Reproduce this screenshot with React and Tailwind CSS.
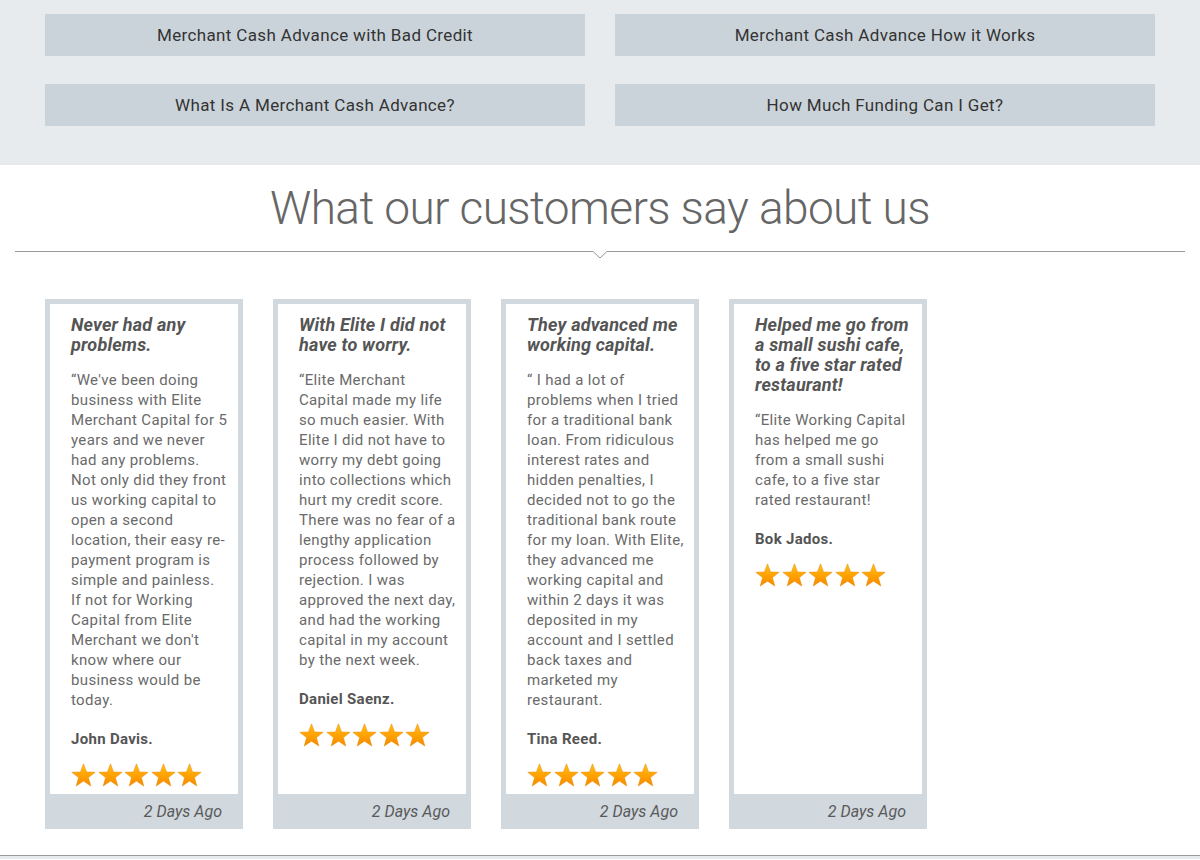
import React from "react";

const LINKS = [
  "Merchant Cash Advance with Bad Credit",
  "Merchant Cash Advance How it Works",
  "What Is A Merchant Cash Advance?",
  "How Much Funding Can I Get?",
];

const REVIEWS = [
  {
    title: "Never had any problems.",
    body: "\u201cWe've been doing business with Elite Merchant Capital for 5 years and we never had any problems. Not only did they front us working capital to open a second location, their easy re-payment program is simple and painless. If not for Working Capital from Elite Merchant we don't know where our business would be today.",
    name: "John Davis.",
  },
  {
    title: "With Elite I did not have to worry.",
    body: "\u201cElite Merchant Capital made my life so much easier. With Elite I did not have to worry my debt going into collections which hurt my credit score. There was no fear of a lengthy application process followed by rejection. I was approved the next day, and had the working capital in my account by the next week.",
    name: "Daniel Saenz.",
  },
  {
    title: "They advanced me working capital.",
    body: "\u201c I had a lot of problems when I tried for a traditional bank loan. From ridiculous interest rates and hidden penalties, I decided not to go the traditional bank route for my loan. With Elite, they advanced me working capital and within 2 days it was deposited in my account and I settled back taxes and marketed my restaurant.",
    name: "Tina Reed.",
  },
  {
    title: "Helped me go from a small sushi cafe, to a five star rated restaurant!",
    body: "\u201cElite Working Capital has helped me go from a small sushi cafe, to a five star rated restaurant!",
    name: "Bok Jados.",
  },
];

function Star({ id }) {
  return (
    <svg width="25" height="25" viewBox="0 0 24 24" className="block">
      <defs>
        <linearGradient id={id} x1="0" y1="0" x2="0" y2="1">
          <stop offset="0" stopColor="#ffc21a" />
          <stop offset="0.55" stopColor="#ffa000" />
          <stop offset="1" stopColor="#f58a00" />
        </linearGradient>
      </defs>
      <polygon
        points="12,0.8 14.9,8.6 23.2,8.9 16.7,14 19,22.1 12,17.4 5,22.1 7.3,14 0.8,8.9 9.1,8.6"
        fill={`url(#${id})`}
        stroke="#e98a00"
        strokeWidth="0.5"
      />
    </svg>
  );
}

function Stars({ prefix }) {
  return (
    <div className="flex gap-[1.5px]">
      {[0, 1, 2, 3, 4].map((i) => (
        <Star key={i} id={`${prefix}-${i}`} />
      ))}
    </div>
  );
}

function ReviewCard({ review, index }) {
  return (
    <div className="flex h-[530px] w-[198px] flex-col bg-[#d1d8de] px-[5px] pt-[5px]">
      <div className="flex-1 bg-white pl-[21px] pr-[10px] pt-[11px]">
        <h3 className="text-[18px] font-bold italic leading-[20px] tracking-[0.2px] text-[#555]">
          {review.title}
        </h3>
        <p className="mt-[15px] text-[15px] leading-[20px] tracking-[0.35px] text-[#6a6a6a]">{review.body}</p>
        <p className="mt-[19px] text-[15px] font-bold leading-[20px] tracking-[0.3px] text-[#555]">
          {review.name}
        </p>
        <div className="mt-[14px]">
          <Stars prefix={`s${index}`} />
        </div>
      </div>
      <div className="flex h-[35px] items-center justify-end pr-[16px] text-[16px] italic text-[#5a5a5a]">
        2 Days Ago
      </div>
    </div>
  );
}

export default function App() {
  return (
    <div className="min-h-[860px] bg-white font-['Roboto',sans-serif]">
      <section className="h-[165px] bg-[#e7ebee] px-[45px] pt-[14px]">
        <div className="grid grid-cols-2 gap-x-[30px] gap-y-[28px]">
          {LINKS.map((label) => (
            <a
              key={label}
              href="#"
              className="flex h-[42px] items-center justify-center bg-[#cbd3da] pt-[2px] text-[17px] tracking-[0.35px] text-[#333]"
            >
              {label}
            </a>
          ))}
        </div>
      </section>

      <section className="px-[15px]">
        <h2 className="pt-[16px] text-center text-[46px] font-light leading-[54px] tracking-[-0.6px] text-[#666]">
          What our customers say about us
        </h2>
        <div className="flex items-start">
          <div className="mt-[16px] h-px flex-1 bg-[#999]" />
          <svg width="14" height="8" viewBox="0 0 14 8" className="mt-[16px] block">
            <polyline points="0,0.5 7,7 14,0.5" fill="none" stroke="#999" strokeWidth="1" />
          </svg>
          <div className="mt-[16px] h-px flex-1 bg-[#999]" />
        </div>
      </section>

      <section className="flex gap-[30px] px-[45px] pt-[40px]">
        {REVIEWS.map((r, i) => (
          <ReviewCard key={r.name} review={r} index={i} />
        ))}
      </section>

      <div className="mt-[26px] h-[4px] border-t border-[#999] bg-[#e7ebee]" />
    </div>
  );
}
